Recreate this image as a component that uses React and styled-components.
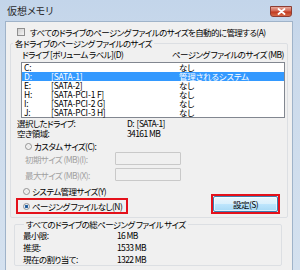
import React from 'react';
import styled, { createGlobalStyle } from 'styled-components';

const GlobalStyle = createGlobalStyle`
  html, body {
    margin: 0;
    padding: 0;
  }
  body {
    width: 300px;
    height: 270px;
    overflow: hidden;
    font-family: "Noto Sans CJK JP", "Noto Sans", sans-serif;
    font-feature-settings: "palt";
    font-size: 8.5px;
    letter-spacing: -0.6px;
    line-height: 10px;
    white-space: nowrap;
    color: #000;
  }
`;

const Frame = styled.div`
  width: 300px;
  height: 270px;
  display: flex;
  flex-direction: column;
  background: linear-gradient(to bottom, #c3d5ea 0, #cbdaeb 60px, #d4e1ef 100%);
  overflow: hidden;
`;

const TitleBar = styled.div`
  height: 21px;
  flex: none;
  display: flex;
  align-items: flex-start;
  justify-content: space-between;
`;

const Title = styled.div`
  margin: 5px 0 0 7px;
  font-size: 10px;
  letter-spacing: 0;
  line-height: 12px;
  color: #2a2a2a;
`;

const CloseButton = styled.div`
  margin: 6px 8px 0 0;
  width: 22px;
  height: 11px;
  box-sizing: border-box;
  border: 1px solid #8d3d33;
  border-radius: 0 0 3px 3px;
  background: linear-gradient(#e8a99b, #d26450 45%, #c0391f 55%, #d66a48);
  display: flex;
  align-items: center;
  justify-content: center;
`;

const Client = styled.div`
  flex: 1;
  margin: 0 7px 0 5px;
  background: #f0f0f0;
  border: 1px solid #9fb3c9;
  border-bottom: none;
  display: flex;
  flex-direction: column;
`;

const CheckRow = styled.div`
  margin: 5px 0 0 11px;
  height: 10px;
  display: flex;
  align-items: center;
  gap: 5px;
`;

const CheckBox = styled.span`
  width: 8px;
  height: 8px;
  box-sizing: border-box;
  border: 1px solid #8f8f8f;
  background: linear-gradient(135deg, #cfcfcf, #f4f4f4);
`;

const Group = styled.fieldset`
  margin: ${(p) => p.$margin};
  padding: 0;
  border: 1px solid #dcdfe3;
  border-radius: 2px;
  min-width: 0;
`;

const Legend = styled.legend`
  margin-left: ${(p) => p.$indent}px;
  padding: 0 2px;
  line-height: 10px;
`;

const HeaderRow = styled.div`
  margin: 1px 0 0 11px;
  height: 10px;
  display: grid;
  grid-template-columns: 150px 1fr;
`;

const ListBox = styled.div`
  margin: 3px 0 0 10px;
  width: 264px;
  box-sizing: border-box;
  border: 1px solid #828790;
  background: #fff;
`;

const ListRow = styled.div`
  height: 9px;
  line-height: 9px;
  padding-left: 2px;
  display: grid;
  grid-template-columns: 27px 128px 1fr;
  background: ${(p) => (p.$selected ? '#3399ff' : 'transparent')};
  color: ${(p) => (p.$selected ? '#fff' : '#000')};
  letter-spacing: -0.2px;
`;

const InfoRow = styled.div`
  margin-left: 6px;
  height: 10px;
  display: grid;
  grid-template-columns: 110px 1fr;
`;

const RadioRow = styled.label`
  margin: ${(p) => p.$margin};
  height: 10px;
  display: flex;
  align-items: center;
  gap: 2px;
`;

const Radio = styled.span`
  width: 7px;
  height: 7px;
  box-sizing: border-box;
  border-radius: 50%;
  border: 1px solid #929292;
  background: ${(p) =>
    p.$checked
      ? 'radial-gradient(circle, #1f4f86 0, #2d6fb0 1.6px, #e8eef5 2px)'
      : 'radial-gradient(circle, #e6e6e6 0, #f9f9f9 3px)'};
`;

const FieldRow = styled.div`
  margin: ${(p) => p.$margin};
  height: 13px;
  display: flex;
  align-items: center;
  color: #a0a0a0;
`;

const FieldLabel = styled.span`
  width: 90px;
`;

const TextBox = styled.span`
  width: 66px;
  height: 13px;
  box-sizing: border-box;
  border: 1px solid #c9c9c9;
  border-radius: 1px;
  background: #f0f0f0;
`;

const ActionRow = styled.div`
  margin: -2px 7px 3px 5px;
  height: 20px;
  display: flex;
  align-items: flex-end;
  justify-content: space-between;
`;

const Highlight = styled.div`
  box-sizing: border-box;
  border: 2px solid #e4111b;
  width: ${(p) => p.$w}px;
  height: ${(p) => p.$h}px;
  display: flex;
  align-items: center;
  padding-left: ${(p) => p.$pad}px;
`;

const Button = styled.div`
  flex: 1;
  height: 16px;
  box-sizing: border-box;
  border: 1px solid #3c7fb1;
  border-radius: 2px;
  background: linear-gradient(#eaf6fd 0, #d9f0fc 50%, #bee6fd 51%, #a7d9f5 100%);
  box-shadow: inset 0 0 0 1px rgba(255, 255, 255, 0.6);
  display: flex;
  align-items: center;
  justify-content: center;
`;

const StatRow = styled.div`
  margin-left: 8px;
  height: 12px;
  display: grid;
  grid-template-columns: 94px 1fr;
  align-items: center;
`;

const drives = [
  ['C:', '', 'なし'],
  ['D:', '[SATA-1]', '管理されるシステム'],
  ['E:', '[SATA-2]', 'なし'],
  ['H:', '[SATA-PCI-1 F]', 'なし'],
  ['I:', '[SATA-PCI-2 G]', 'なし'],
  ['J:', '[SATA-PCI-3 H]', 'なし'],
];

export default function App() {
  return (
    <Frame>
      <GlobalStyle />
      <TitleBar>
        <Title>仮想メモリ</Title>
        <CloseButton>
          <svg width="9" height="7" viewBox="0 0 9 7">
            <path d="M1.5 1 L7.5 6 M7.5 1 L1.5 6" stroke="#fff" strokeWidth="1.8" strokeLinecap="round" />
          </svg>
        </CloseButton>
      </TitleBar>
      <Client>
        <CheckRow>
          <CheckBox />
          <span>すべてのドライブのページング ファイルのサイズを自動的に管理する(A)</span>
        </CheckRow>
        <Group $margin="1px 4px 0 4px">
          <Legend $indent={2}>各ドライブのページング ファイルのサイズ</Legend>
          <HeaderRow>
            <span>ドライブ [ボリューム ラベル](D)</span>
            <span>ページング ファイルのサイズ (MB)</span>
          </HeaderRow>
          <ListBox>
            {drives.map(([d, label, size]) => (
              <ListRow key={d} $selected={d === 'D:'}>
                <span>{d}</span>
                <span>{label}</span>
                <span>{size}</span>
              </ListRow>
            ))}
          </ListBox>
          <InfoRow>
            <span>選択したドライブ:</span>
            <span>D:&nbsp; [SATA-1]</span>
          </InfoRow>
          <InfoRow>
            <span>空き領域:</span>
            <span>34161 MB</span>
          </InfoRow>
          <RadioRow $margin="3px 0 0 14px">
            <Radio />
            <span>カスタム サイズ(C):</span>
          </RadioRow>
          <FieldRow $margin="1px 0 0 14px">
            <FieldLabel>初期サイズ (MB)(I):</FieldLabel>
            <TextBox />
          </FieldRow>
          <FieldRow $margin="3px 0 0 14px">
            <FieldLabel>最大サイズ (MB)(X):</FieldLabel>
            <TextBox />
          </FieldRow>
          <RadioRow $margin="5px 0 0 12px">
            <Radio />
            <span>システム管理サイズ(Y)</span>
          </RadioRow>
          <ActionRow>
            <Highlight $w={112} $h={16} $pad={5}>
              <RadioRow $margin="0">
                <Radio $checked />
                <span>ページング ファイルなし(N)</span>
              </RadioRow>
            </Highlight>
            <Highlight $w={69} $h={20} $pad={0}>
              <Button>設定(S)</Button>
            </Highlight>
          </ActionRow>
        </Group>
        <Group $margin="1px 10px 0 8px">
          <Legend $indent={9}>すべてのドライブの総ページング ファイル サイズ</Legend>
          <StatRow>
            <span>最小限:</span>
            <span>16 MB</span>
          </StatRow>
          <StatRow>
            <span>推奨:</span>
            <span>1533 MB</span>
          </StatRow>
          <StatRow>
            <span>現在の割り当て:</span>
            <span>1322 MB</span>
          </StatRow>
        </Group>
      </Client>
    </Frame>
  );
}
